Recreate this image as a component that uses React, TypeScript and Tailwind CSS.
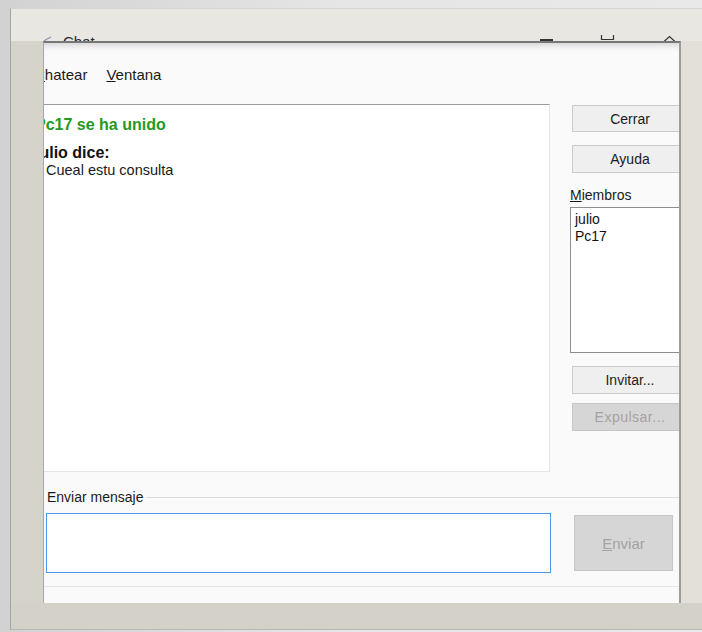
import React from 'react';

/* ─── Shared bits ─────────────────────────────────────────────────────────── */

const FONT = "font-['Liberation_Sans',Arial,sans-serif]";

function WinButton({ label, disabled, className = '' }: { label: React.ReactNode; disabled?: boolean; className?: string }) {
  return (
    <button
      type="button"
      disabled={disabled}
      className={
        'flex shrink-0 items-center justify-center border text-[14px] leading-none ' +
        (disabled
          ? 'bg-[#d6d6d6] border-[#c6c6c6] text-[#a3a3a3]'
          : 'bg-[#efefef] border-[#cbcbcb] text-[#1c1c1c]') +
        ' ' +
        className
      }
    >
      {label}
    </button>
  );
}

/* ─── Title strip (mostly hidden behind the frame) ───────────────────────── */

function TitleStrip() {
  return (
    <div className="flex h-[8px] items-start overflow-hidden text-[#2a2a2a]">
      <svg width="9" height="8" viewBox="0 0 9 8" className="shrink-0 mt-[3px]" aria-hidden>
        <path d="M1 5 L4 3 M4 3 L8 1" stroke="#8a96a8" strokeWidth="1.2" fill="none" />
      </svg>
      <span className="ml-[11px] mt-[1px] text-[15px] leading-none">Chat</span>
      <div className="flex-1" />
      <div className="mt-[6px] h-[1.5px] w-[13px] bg-[#333]" />
      {/* maximize: lower half of the square */}
      <svg width="15" height="8" viewBox="0 0 15 8" className="ml-[47px] shrink-0" aria-hidden>
        <path d="M1.5 2 V6.5 H13.5 V2" stroke="#333" strokeWidth="1.2" fill="none" />
      </svg>
      {/* close: top of the cross */}
      <svg width="15" height="8" viewBox="0 0 15 8" className="ml-[47px] shrink-0" aria-hidden>
        <path d="M1.5 9 L7.5 3.5 L13.5 9" stroke="#333" strokeWidth="1.2" fill="none" />
      </svg>
      <div className="w-[4px] shrink-0" />
    </div>
  );
}

/* ─── Chat window body ───────────────────────────────────────────────────── */

function ChatBody() {
  return (
    <div className="w-[638px] shrink-0 overflow-hidden bg-[#fafafa] border-l border-[#a8a8a8] border-t-2 border-t-[#777] border-r-2 border-r-[#9d9d9d] shadow-[inset_0_7px_7px_-5px_rgba(0,0,0,0.18)]">
      <div className="ml-[-10px] w-[660px] flex flex-col">
        {/* Menu */}
        <div className="h-[61px] pt-[23px] flex gap-[19px] text-[15px] leading-[18px] text-[#1a1a1a]">
          <span>
            <span className="underline">C</span>hatear
          </span>
          <span>
            <span className="underline">V</span>entana
          </span>
        </div>

        {/* Conversation + members */}
        <div className="h-[368px] flex">
          <div className="w-[516px] shrink-0 bg-white border-t border-t-[#9a9a9a] border-r border-r-[#e2e2e2] border-b border-b-[#e6e6e6]">
            <p className="mt-[10px] pl-[1px] text-[16px] leading-[20px] font-bold text-[#1f9a22]">Pc17 se ha unido</p>
            <p className="mt-[8px] pl-[1px] text-[16px] leading-[20px] font-bold text-[#111]">julio dice:</p>
            <p className="mt-[-1px] pl-[12px] text-[14.5px] leading-[16px] text-[#1a1a1a]">Cueal estu consulta</p>
          </div>

          <div className="ml-[22px] w-[116px] shrink-0 flex flex-col">
            <WinButton label="Cerrar" className="mt-[1px] h-[27px]" />
            <WinButton label="Ayuda" className="mt-[13px] h-[28px]" />
            <span className="mt-[14px] ml-[-2px] text-[14px] leading-[16px] text-[#1a1a1a]">
              <span className="underline">M</span>iembros
            </span>
            <div className="mt-[4px] ml-[-2px] h-[146px] bg-white border border-[#8e8e8e] pl-[4px] pt-[3px] text-[14px] leading-[16.5px] text-[#111]">
              <div>julio</div>
              <div>Pc17</div>
            </div>
            <WinButton label="Invitar..." className="mt-[13px] h-[28px]" />
            <WinButton label="Expulsar..." disabled className="mt-[9px] h-[28px] tracking-[0.5px]" />
          </div>
        </div>

        {/* Send group */}
        <div className="pt-[17px] pl-[13px] flex items-center">
          <span className="text-[14px] leading-[16px] text-[#1a1a1a]">Enviar mensaje</span>
          <div className="ml-[2px] flex-1 h-px bg-[#dedede]" />
        </div>
        <div className="mt-[8px] flex items-start">
          <div className="ml-[12px] w-[505px] h-[60px] shrink-0 bg-white border-[1.5px] border-[#4d99e8]" />
          <WinButton
            label={
              <span>
                <span className="underline">E</span>nviar
              </span>
            }
            disabled
            className="ml-[23px] mt-[2px] w-[99px] h-[56px] text-[15px]"
          />
        </div>
        <div className="mt-[13px] h-px bg-[#e4e4e4]" />
      </div>
    </div>
  );
}

/* ─── App ───────────────────────────────────────────────────────────────── */

export default function App() {
  return (
    <div className={`${FONT} w-[702px] h-[632px] overflow-hidden flex bg-linear-to-r from-[#d2d2d2] via-[#e6e6e6] to-[#e9e9e9] pl-[10px] pt-[8px] pb-[2px]`}>
      <div className="w-[692px] flex flex-col border-l border-l-[#a6a6a6] border-t border-t-[#d4d4d4]">
        {/* Top band of the frame */}
        <div className="h-[32px] shrink-0 flex flex-col justify-end bg-[#e9e7e1] pl-[32px] pr-[21px]">
          <TitleStrip />
        </div>

        {/* Frame sides around the window */}
        <div className="h-[562px] shrink-0 flex">
          <div className="w-[32px] shrink-0 bg-[#d6d3cb]" />
          <ChatBody />
          <div className="w-[21px] shrink-0 bg-[#e3e0da]" />
        </div>

        {/* Bottom band */}
        <div className="flex-1 bg-[#d4d1c9] border-b border-b-[#b9b7b1]" />
      </div>
    </div>
  );
}
